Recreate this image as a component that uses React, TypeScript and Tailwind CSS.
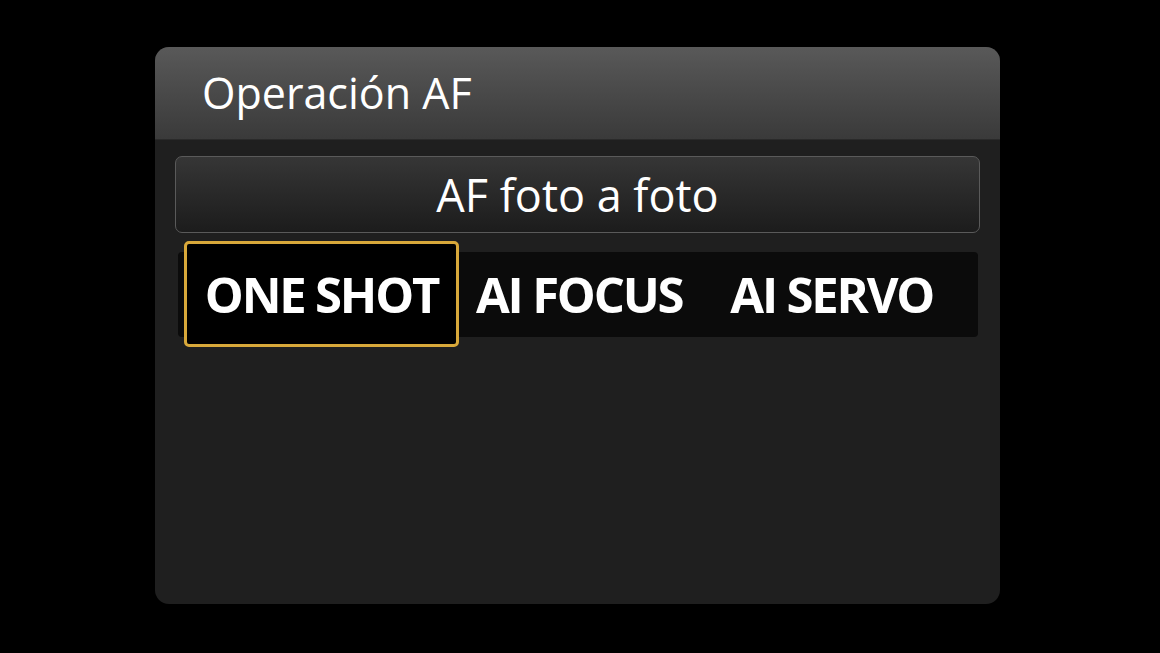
export default function App() {
  return (
    <div className="w-[1160px] h-[653px] bg-black flex items-start justify-start pt-[47px] pl-[155px]" style={{ fontFamily: '"Open Sans", "Noto Sans", sans-serif' }}>
      <div className="w-[845px] h-[557px] rounded-[14px] bg-[#1f1f1f] overflow-hidden flex flex-col">
        <div className="h-[93px] bg-gradient-to-b from-[#595959] to-[#3a3a3a] border-b border-[#2a2a2a] flex items-center pl-[47px] pb-[2px]">
          <span className="text-white text-[43px] leading-none">Operación AF</span>
        </div>
        <div className="px-[20px] pt-[16px] flex flex-col">
          <div className="h-[77px] rounded-[7px] border border-[#5a5a5a] bg-gradient-to-b from-[#363636] to-[#1c1c1c] flex items-center justify-center">
            <span className="text-white text-[45px] leading-none">AF foto a foto</span>
          </div>
          <div className="mt-[8px] relative h-[106px] flex items-center">
            <div className="absolute left-[3px] right-[2px] top-[11px] bottom-[10px] bg-[#0b0b0b] rounded-[4px]" />
            <div className="relative flex items-center h-full">
              <div className="w-[275px] h-[106px] ml-[9px] rounded-[5px] border-[3px] border-[#d8a83a] bg-black flex items-center justify-center">
                <span className="text-white font-bold text-[49px] leading-none tracking-[-2.2px]">ONE SHOT</span>
              </div>
              <span className="ml-[17px] text-white font-bold text-[49px] leading-none tracking-[-2.2px]">AI FOCUS</span>
              <span className="ml-[48px] text-white font-bold text-[49px] leading-none tracking-[-2.2px]">AI SERVO</span>
            </div>
          </div>
        </div>
      </div>
    </div>
  );
}
